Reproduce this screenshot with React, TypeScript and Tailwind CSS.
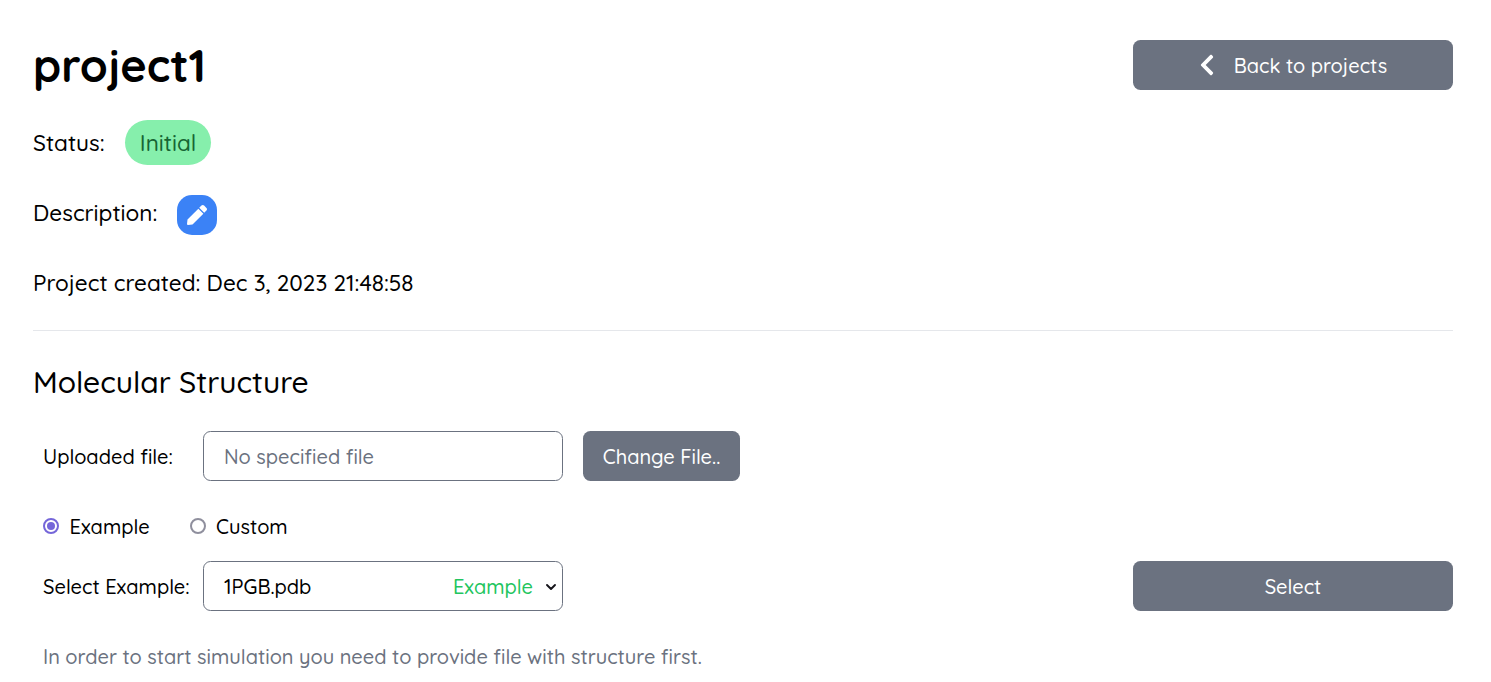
import { useState } from 'react';
import type { ReactNode } from 'react';
import { FaChevronLeft, FaPen } from 'react-icons/fa';

const buttonStyle = 'flex h-[50px] items-center justify-center rounded-[7.5px] bg-[#6b7280] pt-0.5 text-white';

function Radio({ checked, onSelect, children }: { checked: boolean; onSelect: () => void; children: ReactNode }) {
  return (
    <button type="button" role="radio" aria-checked={checked} onClick={onSelect} className="flex items-center gap-[10.5px]">
      <span
        className={
          checked
            ? 'flex size-4 items-center justify-center rounded-full border-2 border-[#7566d9]'
            : 'flex size-4 items-center justify-center rounded-full border-2 border-[#8f8f9d]'
        }
      >
        {checked && <span className="size-2 rounded-full bg-[#7566d9]" />}
      </span>
      <span className="pt-0.5">{children}</span>
    </button>
  );
}

export default function App() {
  const [source, setSource] = useState('example');

  return (
    <main className="flex h-[682px] flex-col overflow-hidden bg-white pt-10 pr-[38px] pl-[33px] font-['Quicksand','Lato',sans-serif] text-[20px] leading-[30px] font-medium text-black">
      <header className="flex h-[50px] items-center justify-between">
        <h1 className="text-[45px] leading-[50px] font-bold">project1</h1>
        <button type="button" className={`${buttonStyle} w-80 pr-1`}>
          <FaChevronLeft className="mr-[15px] mb-0.5 size-6" />
          <span>Back to projects</span>
        </button>
      </header>

      <section className="mt-[30px] flex flex-col text-[22.5px] leading-[35px]">
        <div className="flex h-[45px] items-center">
          <span className="w-[92px]">Status:</span>
          <span className="flex h-[45px] w-[86px] items-center justify-center rounded-full bg-[#86efac] text-[#166534]">
            Initial
          </span>
        </div>
        <div className="mt-[30px] flex h-10 items-start">
          <span className="w-36">Description:</span>
          <button type="button" aria-label="Edit description" className="flex size-10 items-center justify-center rounded-[15px] bg-[#3b82f6] text-white">
            <FaPen className="size-5" />
          </button>
        </div>
        <p className="mt-[30px]">Project created: Dec 3, 2023 21:48:58</p>
      </section>

      <hr className="mt-[30px] border-[#e5e7eb]" />

      <section className="flex flex-col">
        <h2 className="mt-[29px] text-[30px] leading-[45px]">Molecular Structure</h2>
        <div className="mt-[26px] flex h-[50px] items-center pl-2.5">
          <label className="w-40 pt-0.5">Uploaded file:</label>
          <div className="flex h-[50px] w-[360px] items-center rounded-[7.5px] border border-[#6b7280] px-5 pt-0.5 text-[#6b7280]">
            No specified file
          </div>
          <button type="button" className={`${buttonStyle} ml-5 w-[157px]`}>Change File..</button>
        </div>
        <div role="radiogroup" className="mt-[30px] flex h-[30px] items-center gap-10 pl-2.5">
          <Radio checked={source === 'example'} onSelect={() => setSource('example')}>
            Example
          </Radio>
          <Radio checked={source === 'custom'} onSelect={() => setSource('custom')}>
            Custom
          </Radio>
        </div>
        <div className="mt-5 flex h-[50px] items-center pl-2.5">
          <label className="w-40 pt-0.5">Select Example:</label>
          <div className="flex h-[50px] w-[360px] items-center rounded-[7.5px] border border-[#6b7280] pt-0.5 pr-[5px] pl-5">
            <span>1PGB.pdb</span>
            <span className="ml-auto text-[#22c55e]">Example</span>
            <svg viewBox="0 0 12 8" className="ml-3 h-2 w-3" fill="none" stroke="#15141a" strokeWidth="1.9" strokeLinecap="round" strokeLinejoin="round">
              <path d="M2 2l4 4 4-4" />
            </svg>
          </div>
          <button type="button" className={`${buttonStyle} ml-auto w-80`}>Select</button>
        </div>
        <p className="mt-[31px] pl-2.5 text-[#6b7280]">
          In order to start simulation you need to provide file with structure first.
        </p>
      </section>
    </main>
  );
}
